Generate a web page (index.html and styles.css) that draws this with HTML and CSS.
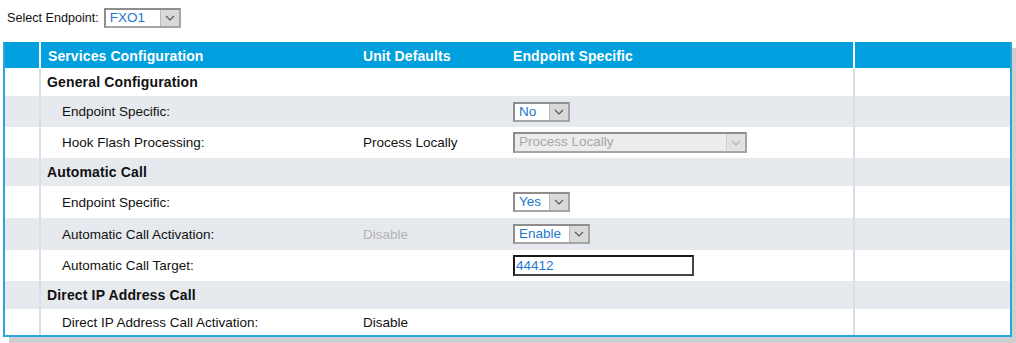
FILE: index.html
```html
<!DOCTYPE html>
<html>
<head>
<meta charset="utf-8">
<link rel="stylesheet" href="styles.css">
</head>
<body>
<div class="top">
  <span class="top-label">Select Endpoint:</span>
  <span class="sel w77"><span class="val">FXO1</span><span class="arr"><svg viewBox="0 0 10 6" width="10" height="6"><path d="M1 1 L5 5 L9 1" fill="none" stroke="#555" stroke-width="1.1"/></svg></span></span>
</div>
<div class="frame">
  <table class="grid">
    <colgroup><col class="c0"><col class="c1"><col class="c2"><col class="c3"><col class="c4"></colgroup>
    <thead>
      <tr><th></th><th>Services Configuration</th><th>Unit Defaults</th><th>Endpoint Specific</th><th class="last"></th></tr>
    </thead>
    <tbody>
      <tr class="sec w"><td></td><td colspan="3">General Configuration</td><td class="last"></td></tr>
      <tr class="sub g"><td></td><td class="lab">Endpoint Specific:</td><td></td><td><span class="sel w57"><span class="val">No</span><span class="arr"><svg viewBox="0 0 10 6" width="10" height="6"><path d="M1 1 L5 5 L9 1" fill="none" stroke="#555" stroke-width="1.1"/></svg></span></span></td><td class="last"></td></tr>
      <tr class="sub w"><td></td><td class="lab">Hook Flash Processing:</td><td>Process Locally</td><td><span class="sel w234 dis"><span class="val">Process Locally</span><span class="arr"><svg viewBox="0 0 10 6" width="10" height="6"><path d="M1 1 L5 5 L9 1" fill="none" stroke="#b0b0b0" stroke-width="1.1"/></svg></span></span></td><td class="last"></td></tr>
      <tr class="sec g"><td></td><td colspan="3">Automatic Call</td><td class="last"></td></tr>
      <tr class="sub w tall"><td></td><td class="lab">Endpoint Specific:</td><td></td><td><span class="sel w57"><span class="val">Yes</span><span class="arr"><svg viewBox="0 0 10 6" width="10" height="6"><path d="M1 1 L5 5 L9 1" fill="none" stroke="#555" stroke-width="1.1"/></svg></span></span></td><td class="last"></td></tr>
      <tr class="sub g tall"><td></td><td class="lab">Automatic Call Activation:</td><td class="muted">Disable</td><td><span class="sel w77"><span class="val">Enable</span><span class="arr"><svg viewBox="0 0 10 6" width="10" height="6"><path d="M1 1 L5 5 L9 1" fill="none" stroke="#555" stroke-width="1.1"/></svg></span></span></td><td class="last"></td></tr>
      <tr class="sub w"><td></td><td class="lab">Automatic Call Target:</td><td></td><td><span class="inp">44412</span></td><td class="last"></td></tr>
      <tr class="sec g"><td></td><td colspan="3">Direct IP Address Call</td><td class="last"></td></tr>
      <tr class="sub w endrow"><td></td><td class="lab">Direct IP Address Call Activation:</td><td>Disable</td><td></td><td class="last"></td></tr>
    </tbody>
  </table>
</div>
</body>
</html>
```

FILE: styles.css
```css
html, body {
  margin: 0;
  padding: 0;
  background: #ffffff;
}
body {
  font-family: "Liberation Sans", Arial, sans-serif;
  font-size: 13.5px;
  color: #111;
  width: 1016px;
  height: 343px;
  overflow: hidden;
}
.top {
  display: flex;
  align-items: center;
  height: 20px;
  padding: 8px 0 0 7px;
  gap: 5px;
}
.top-label {
  font-size: 12.6px;
}
.sel {
  display: inline-flex;
  box-sizing: border-box;
  height: 20px;
  border: 2px solid #8e8e8e;
  border-right-color: #a5a5a5;
  border-bottom-color: #a5a5a5;
  background: #fff;
  vertical-align: middle;
}
.sel .val {
  flex: 1;
  color: #1d78cf;
  font-size: 13.5px;
  line-height: 16px;
  padding-left: 4px;
}
.sel .arr {
  width: 18px;
  background: #d9d9d9;
  border-left: 1px solid #bbbbbb;
  display: flex;
  align-items: center;
  justify-content: center;
}
.sel.dis { background: #ececec; }
.sel.dis .val { color: #a8a8a8; }
.sel.dis .arr { background: #e2e2e2; border-left-color: #d0d0d0; }
.w57 { width: 57px; }
.w77 { width: 77px; }
.w234 { width: 234px; height: 21px; }
.inp {
  display: inline-block;
  box-sizing: border-box;
  width: 181px;
  height: 21px;
  border: 2px solid #1a1a1a;
  border-right-color: #444;
  border-bottom-color: #444;
  color: #1d78cf;
  line-height: 17px;
  padding-left: 1px;
  vertical-align: middle;
}
.frame {
  margin: 14px 0 0 3px;
  width: 1009px;
  box-sizing: border-box;
  border: 2px solid #2aa6de;
  border-top: none;
  box-shadow: 6px 6px 0 #cfcfcf;
}
.grid {
  width: 100%;
  border-collapse: collapse;
  table-layout: fixed;
}
.c0 { width: 35px; }
.c1 { width: 315px; }
.c2 { width: 150px; }
.c3 { width: 349px; }
.c4 { width: auto; }
.grid th {
  background: #00a0df;
  color: #fff;
  font-weight: bold;
  font-size: 14px;
  letter-spacing: 0.1px;
  text-align: left;
  height: 25px;
  padding: 1px 0 0 7px;
  border-left: 2px solid #fff;
}
.grid th:first-child { border-left: none; }
.grid th:nth-child(3), .grid th:nth-child(4) { border-left: none; padding-left: 8px; }
.grid td {
  padding: 0 0 0 8px;
  border-left: 2px solid #d7dee6;
  white-space: nowrap;
}
.grid td:first-child { border-left: none; }
.grid tr td:nth-child(3), .grid tr td:nth-child(4) { border-left: none; }
.grid tr.sec td:nth-child(3) { border-left: 2px solid #d7dee6; }
.grid tr.w td { background: #fff; }
.grid tr.g td { background: #e6e9ee; }
.grid tr.sec td {
  height: 28px;
  font-weight: bold;
  font-size: 14px;
  letter-spacing: 0.15px;
  padding-left: 6px;
}
.grid tr.sec td:first-child { padding-left: 0; }
.grid tr.sub td { height: 31px; }
.grid tr.sub.tall td { height: 32px; }
.grid tr.endrow td { height: 26px; }
.grid td.lab { padding-left: 21px; }
.grid td.muted { color: #b3b3b3; }
```
